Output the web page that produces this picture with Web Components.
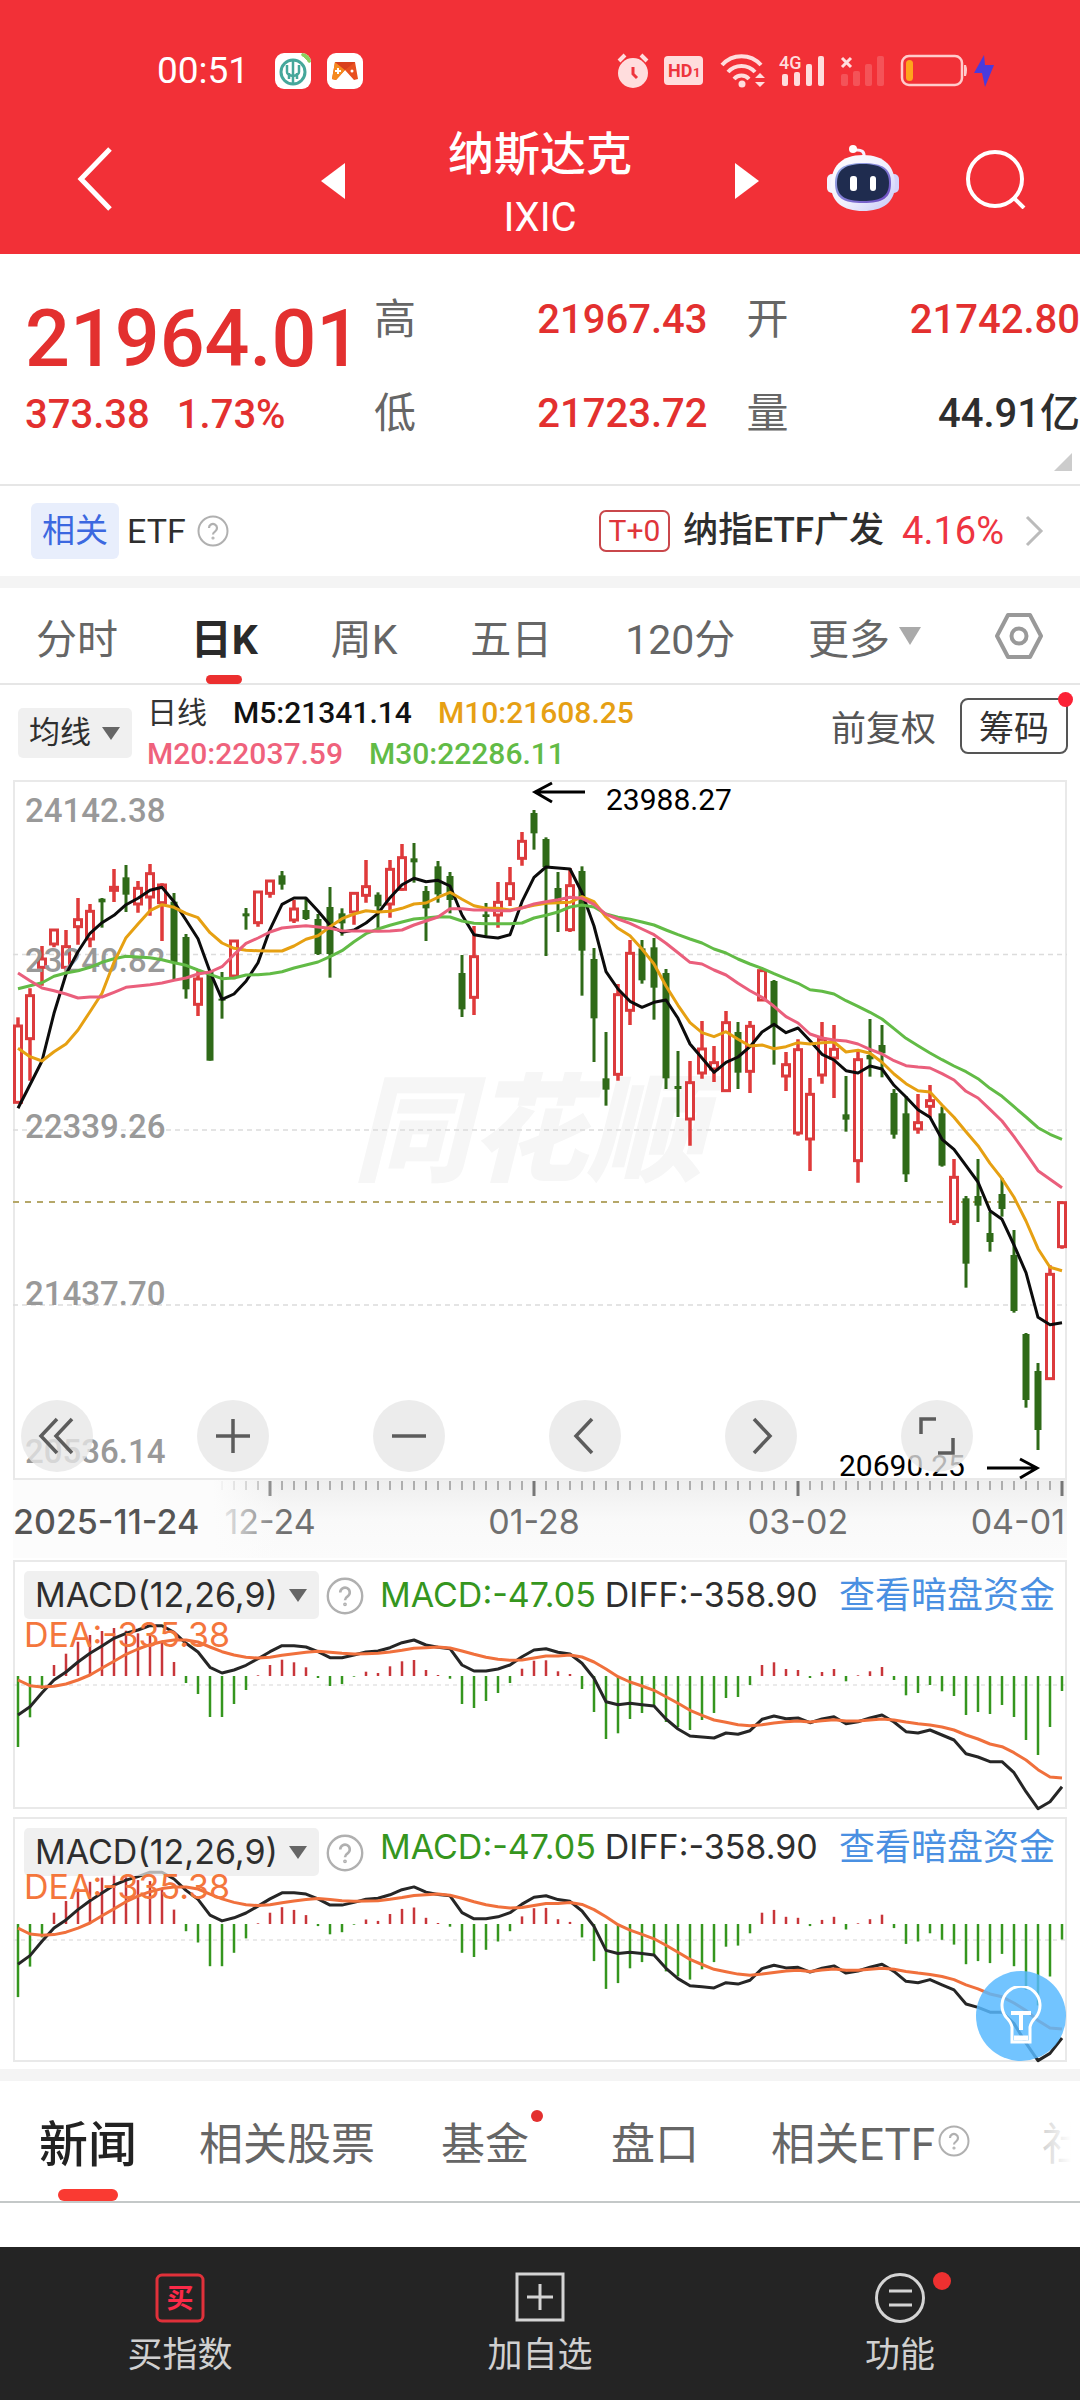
<!DOCTYPE html>
<html lang="zh-CN">
<head>
<meta charset="utf-8">
<meta name="viewport" content="width=device-width, initial-scale=1">
<title>纳斯达克 IXIC</title>
<style>
  html { background: #fff; }
  body {
    margin: 0; min-height: 100vh; display: flex; flex-direction: column;
    font-family: Roboto, "Noto Sans CJK SC", sans-serif; color: #2e2e2e; background: #fff;
    --red: #e3302f; --grey: #666; --line: #e6e6e6; --ui: Inter, "Noto Sans CJK SC", sans-serif;
  }
</style>
</head>
<body>
<app-header></app-header>
<quote-panel price="21964.01" change="373.38" percent="1.73%">
  <quote-stat label="高">21967.43</quote-stat>
  <quote-stat label="开">21742.80</quote-stat>
  <quote-stat label="低">21723.72</quote-stat>
  <quote-stat label="量" plain>44.91亿</quote-stat>
</quote-panel>
<related-etf></related-etf>
<section-gap></section-gap>
<period-tabs></period-tabs>
<chart-legend></chart-legend>
<candle-chart></candle-chart>
<time-axis></time-axis>
<macd-panel></macd-panel>
<macd-panel compact></macd-panel>
<section-gap></section-gap>
<news-tabs></news-tabs>
<bottom-nav>
  <nav-item label="买指数"><svg width="50" height="52" viewBox="0 0 50 52"><rect x="2" y="3" width="46" height="46" rx="5" fill="none" stroke="#e0313a" stroke-width="3"/><text x="25" y="36" font-size="27" font-weight="700" fill="#fb2a48" text-anchor="middle">买</text></svg></nav-item>
  <nav-item label="加自选"><svg width="50" height="52" viewBox="0 0 50 52" fill="none" stroke="#d4d4d4" stroke-width="3"><rect x="2" y="2" width="46" height="46"/><path d="M25 12V38M12 25H38"/></svg></nav-item>
  <nav-item label="功能" dot><svg width="50" height="52" viewBox="0 0 50 52" fill="none" stroke="#d4d4d4" stroke-width="3"><circle cx="25" cy="26" r="23.5"/><path d="M14 19H37M14 33H37"/></svg></nav-item>
</bottom-nav>

<script>
const RESET = `
  *, *::before, *::after, :host { box-sizing: border-box; }
  button, select { font: inherit; color: inherit; background: none; border: 0; margin: 0; padding: 0; border-radius: 0; }
  select { appearance: none; outline: none; }
  a { color: inherit; text-decoration: none; }
  svg { display: block; flex: none; }
`;
function define(name, css, render) {
  customElements.define(name, class extends HTMLElement {
    connectedCallback() {
      if (this.shadowRoot) return;
      const root = this.attachShadow({ mode: 'open' });
      root.innerHTML = `<style>${RESET}${css}</style>${render(this)}`;
    }
  });
}

/* ---------- small shared parts ---------- */
define('section-gap', `:host { display: block; height: 12px; background: #f4f4f4; flex: none; }`, () => '');

define('help-mark', `:host { display: block; width: var(--size, 32px); height: var(--size, 32px); flex: none; }
  svg { width: 100%; height: 100%; }`,
  () => `<svg viewBox="0 0 32 32" fill="none" stroke="#b0b0b0" stroke-width="2" role="img" aria-label="help"><circle cx="16" cy="16" r="14.5"/><path d="M12 13a4 4 0 1 1 6.200 3.300Q16 17.700 16 19.500" stroke-width="2.200"/><circle cx="16" cy="23" r=".6"/></svg>`);

define('pick-list', `
  :host { display: grid; align-items: center; background: rgba(234, 234, 234, .72); border-radius: 5px; height: 50px; }
  select { grid-area: 1 / 1; height: 100%; padding: 0 41px 0 11px; }
  svg { grid-area: 1 / 1; justify-self: end; margin-right: 12px; pointer-events: none; }`,
  el => `<select aria-label="${el.getAttribute('value')}"><option>${el.getAttribute('value')}</option></select>
    <svg width="18" height="14" viewBox="0 0 18 14"><path d="M0 1H18L9 14Z" fill="#666"/></svg>`);

/* ---------- header ---------- */
define('status-bar', `
  :host { display: flex; align-items: center; height: 104px; padding: 38px 84px 0 157px; color: #fff; font-size: 37px; line-height: 66px; }
  svg { overflow: visible; }
  .apps { display: flex; gap: 16px; margin-left: 26px; }
  .state { display: flex; align-items: center; gap: 14px; margin-left: auto; }
`, () => `
  <span>00:51</span>
  <span class="apps">
    <svg width="36" height="36" viewBox="0 0 36 36"><rect width="36" height="36" rx="9" fill="#fff"/><circle cx="18" cy="19" r="12" fill="none" stroke="#45a79b" stroke-width="3"/><path d="M18 7V31M12 12v7q0 3 6 4 6-1 6-4v-7M14 20v6M22 20v6" fill="none" stroke="#45a79b" stroke-width="2.500"/><path d="M27 0a9 9 0 0 1 9 9l-2 1-8-8Z" fill="#8ccf5f"/><path d="M28 4l4 4" stroke="#fff"/></svg>
    <svg width="36" height="36" viewBox="0 0 36 36"><rect width="36" height="36" rx="9" fill="#fff"/><path d="M8 9h20l3 17-4 1-9-10-9 10-4-1Z" fill="#e8501f"/><path d="M8 9l10 8-9 10-4-1Z" fill="#f58a1f"/><path d="M8 9h20l-10 8Z" fill="#d9401c"/><path d="M11 15v6M8 18h6" stroke="#fff" stroke-width="2"/><circle cx="25" cy="18" r="1.500" fill="#fff"/></svg>
  </span>
  <span class="state">
    <svg width="34" height="36" viewBox="0 0 34 36"><circle cx="17" cy="20" r="15" fill="#fdd"/><path d="M3 8l6-6M31 8l-6-6" stroke="#fdd" stroke-width="4"/><path d="M17 14v7l4 4" fill="none" stroke="#ee343c" stroke-width="3"/></svg>
    <svg width="40" height="30" viewBox="0 0 40 30"><rect width="39" height="29" rx="4" fill="#fdd"/><text x="4" y="21" font-size="18" font-weight="700" fill="#ee343c">HD</text><text x="29" y="21" font-size="13" font-weight="700" fill="#ee343c">1</text></svg>
    <svg width="46" height="36" viewBox="0 0 46 36" fill="none" stroke="#fdd" stroke-width="4"><path d="M4 12a26 26 0 0 1 39 0M10 19a18 18 0 0 1 27 0M16 26a10 10 0 0 1 15 0"/><circle cx="24" cy="31" r="3.500" fill="#fdd" stroke="none"/><path d="M37 25l5-5 5 5ZM37 29l5 5 5-5Z" fill="#fdd" stroke="none"/></svg>
    <svg width="48" height="36" viewBox="0 0 48 36"><text x="1" y="16" font-size="18" font-weight="500" fill="#fdd">4G</text><g fill="#fdd"><rect x="4" y="21" width="6" height="12" rx="2"/><rect x="16" y="19" width="6" height="14" rx="2"/><rect x="28" y="11" width="6" height="22" rx="2"/><rect x="40" y="3" width="6" height="30" rx="2"/></g></svg>
    <svg width="46" height="36" viewBox="0 0 46 36"><path d="M2 5l9 9M11 5l-9 9" stroke="#fdd" stroke-width="3"/><g fill="#fdd" opacity=".2"><rect x="1" y="21" width="7" height="12" rx="2"/><rect x="13" y="18" width="7" height="15" rx="2"/><rect x="25" y="11" width="7" height="22" rx="2"/><rect x="37" y="3" width="7" height="30" rx="2"/></g></svg>
    <svg width="96" height="36" viewBox="0 0 96 36"><rect x="2" y="3" width="60" height="29" rx="7" fill="none" stroke="#fcc" stroke-width="2.500"/><rect x="6" y="7" width="7" height="21" rx="3.500" fill="#ffa41c"/><path d="M64 12h2q2 5 0 11h-2Z" fill="#fcc"/><path d="M84 2L74 20h8l3 14L94 12h-9Z" fill="#4a3bdc"/></svg>
  </span>`);

define('title-bar', `
  :host { display: grid; grid-template-columns: 345px minmax(0, 1fr) 345px; align-items: center; height: 150px; color: #fff; }
  .left, .right { display: flex; justify-content: space-between; align-items: center; }
  .left { padding-left: 77px; } .right { padding-right: 54px; }
  .step { padding-top: 4px; }
  h1 { margin: 0; padding-top: 14px; text-align: center; font-weight: 500; font-size: 46px; line-height: 64px; }
  small { display: block; font-size: 40px; font-weight: 400; line-height: 64px; }
`, () => `
  <div class="left">
    <button aria-label="返回"><svg width="36" height="64" viewBox="0 0 36 64"><path d="M33 2L4 32L33 62" fill="none" stroke="#fff" stroke-width="5"/></svg></button>
    <button class="step" aria-label="上一个"><svg width="24" height="36" viewBox="0 0 24 36"><path d="M24 0V36L0 18Z" fill="#fff"/></svg></button>
  </div>
  <h1>纳斯达克<small>IXIC</small></h1>
  <div class="right">
    <button class="step" aria-label="下一个"><svg width="24" height="36" viewBox="0 0 24 36"><path d="M0 0V36L24 18Z" fill="#fff"/></svg></button>
    <button aria-label="助手"><svg width="72" height="68" viewBox="0 0 72 68">
      <defs><linearGradient id="shell" x1="0" y1="0" x2="1" y2="1"><stop offset="0" stop-color="#fff"/><stop offset=".55" stop-color="#f0effd"/><stop offset="1" stop-color="#c3c6f6"/></linearGradient>
      <linearGradient id="rim" x1="0" y1="0" x2="1" y2="1"><stop offset="0" stop-color="#9ab4e8"/><stop offset="1" stop-color="#6a45c0"/></linearGradient></defs>
      <path d="M37 12Q38 4 28 5" fill="none" stroke="#f7f0ff" stroke-width="3"/><circle cx="26" cy="4" r="4" fill="#fff"/>
      <rect x="0" y="29" width="12" height="19" rx="5" fill="#f3f3ff"/><rect x="60" y="29" width="12" height="19" rx="5" fill="#d3d3fa"/>
      <path d="M36 10C58 10 68 22 68 40C68 57 56 66 36 66C16 66 4 57 4 40C4 22 14 10 36 10Z" fill="url(#shell)"/>
      <path d="M36 18C56 18 64 24 64 38C64 53 56 58 36 58C16 58 8 53 8 38C8 24 16 18 36 18Z" fill="url(#rim)"/>
      <path d="M36 19C54 19 62 25 62 38C62 51 54 56 36 56C18 56 10 51 10 38C10 25 18 19 36 19Z" fill="#1f2c4f"/>
      <rect x="23" y="31" width="7" height="15" rx="3" fill="#fff"/><rect x="43" y="31" width="6" height="15" rx="3" fill="#fff"/></svg></button>
    <button aria-label="搜索"><svg width="60" height="60" viewBox="0 0 60 60" fill="none" stroke="#fff" stroke-width="4"><circle cx="29" cy="30" r="27"/><path d="M47 48L58 59"/></svg></button>
  </div>`);

define('app-header', `:host { display: block; background: #f23037; }`, () => `<status-bar></status-bar><title-bar></title-bar>`);

/* ---------- quote ---------- */
define('quote-stat', `
  :host { display: flex; justify-content: space-between; align-items: center; font-size: 40px; font-weight: 500; color: var(--red); line-height: 94px; }
  :host([plain]) { color: #2e2e2e; }
  span { color: var(--grey); font-size: 42px; font-weight: 400; }
`, el => `<span>${el.getAttribute('label')}</span><slot></slot>`);

define('quote-panel', `
  :host { display: grid; grid-template-columns: 374px minmax(0, 1fr); height: 232px; border-bottom: 2px solid var(--line); position: relative; color: var(--red); }
  .price { padding: 35px 0 0 25px; }
  strong { display: block; font-size: 79px; line-height: 100px; font-weight: 500; }
  p { margin: 0; display: flex; gap: 27px; font-size: 40px; line-height: 52px; font-weight: 500; }
  .stats { display: grid; grid-template-columns: 1fr 1fr; column-gap: 39px; padding-top: 19px; align-content: start; }
  .more { position: absolute; right: 8px; bottom: 13px; }
`, el => `
  <div class="price"><strong>${el.getAttribute('price')}</strong>
    <p><span>${el.getAttribute('change')}</span><span>${el.getAttribute('percent')}</span></p></div>
  <div class="stats"><slot></slot></div>
  <svg class="more" width="18" height="18"><path d="M18 0V18H0Z" fill="#ccc"/></svg>`);

define('related-etf', `
  :host { display: flex; align-items: center; height: 90px; padding: 0 36px 0 31px; }
  .tag { background: #e8eefc; color: #3c68e0; border-radius: 6px; padding: 0 11px; font-size: 33px; line-height: 56px; }
  .name { font-size: 34px; margin: 0 11px 0 8px; }
  a { display: flex; align-items: center; margin-left: auto; font-size: 35px; line-height: 50px; }
  .t0 { border: 2px solid #c9474b; color: #e0353a; border-radius: 7px; padding: 0 8px; font-size: 30px; line-height: 38px; margin-right: 13px; }
  .fund { font-weight: 500; }
  .up { color: #ee3441; font-size: 38px; margin: 0 20px 0 18px; }
`, () => `<span class="tag">相关</span><span class="name">ETF</span><help-mark></help-mark>
  <a href="#etf"><span class="t0">T+0</span><span class="fund">纳指ETF广发</span><span class="up">4.16%</span>
  <svg width="20" height="34" viewBox="0 0 20 34"><path d="M3 3L17 17L3 31" fill="none" stroke="#bbb" stroke-width="3"/></svg></a>`);

/* ---------- chart controls ---------- */
define('period-tabs', `
  :host { display: block; height: 97px; border-bottom: 2px solid var(--line); }
  nav { display: flex; align-items: stretch; justify-content: space-between; height: 96px; padding: 0 36px; color: var(--grey); font-size: 41px; }
  button { position: relative; white-space: nowrap; display: flex; align-items: center; gap: 9px; }
  .on { color: #2a2a2a; font-weight: 700; }
  .on::after { content: ""; position: absolute; bottom: 0; left: 50%; width: 36px; margin-left: -18px; height: 9px; border-radius: 5px; background: #ec2f2f; }
`, () => `<nav><button>分时</button><button class="on">日K</button><button>周K</button><button>五日</button><button>120分</button>
  <button aria-haspopup="menu">更多<svg width="22" height="18" viewBox="0 0 22 18"><path d="M0 0H22L11 18Z" fill="#aaa"/></svg></button>
  <button aria-label="设置"><svg width="50" height="48" viewBox="0 0 50 48" fill="none" stroke="#999" stroke-width="4" stroke-linejoin="round"><path d="M14 3H36L47 24L36 45H14L3 24Z"/><circle cx="25" cy="24" r="7.500"/></svg></button></nav>`);

define('chart-legend', `
  :host { display: flex; align-items: center; height: 95px; padding: 0 12px 0 18px; }
  pick-list { font-size: 31px; margin-right: 15px; }
  .ma { font-size: 30px; line-height: 41px; font-weight: 500; padding-top: 1px; }
  .ma div { display: flex; gap: 26px; }
  .first { color: #111; } .first b { font-weight: 400; color: #333; }
  .adj { margin: 0 0 14px auto; font-size: 35px; color: #555; }
  .chip { position: relative; margin: 0 0 14px 24px; border: 2px solid #555; border-radius: 8px; height: 56px; padding: 0 17px; font-size: 35px; color: #333; }
  .chip::after { content: ""; position: absolute; right: -7px; top: -8px; width: 15px; height: 15px; border-radius: 50%; background: #fb2236; }
`, () => `<pick-list value="均线"></pick-list>
  <div class="ma"><div class="first"><b>日线</b><span>M5:21341.14</span><span style="color:#e6a014">M10:21608.25</span></div>
  <div><span style="color:#ef627c">M20:22037.59</span><span style="color:#62bb46">M30:22286.11</span></div></div>
  <button class="adj">前复权</button><button class="chip">筹码</button>`);

/* ---------- series; plot units are thirds of a pixel, one column every 12 pixels ---------- */
const UNIT = 3, STEP = 12, LEFT = 5;
const nums = s => s.trim().split(/[\s,]+/).map(Number);
const CANDLES = `r742,768,997,997 r655,677,806,932 r528,567,592,647 r478,480,522,532 r480,530,592,600 r384,449,470,524 r402,424,507,532 g384,386,397,473
r297,352,361,396 g285,322,374,426 r333,355,402,428 r282,311,381,437 r340,345,398,513 g369,395,578,627 g492,501,658,686 r598,627,703,738
g600,605,872,872 g606,686,692,746 r511,513,618,628 g414,430,439,479 r364,366,458,470 r331,333,370,383 g303,316,344,359 r390,417,450,459
g385,420,447,450 g432,447,552,555 g351,411,552,623 g415,430,460,497 r367,370,426,464 r270,350,376,398 g367,374,409,475 r270,298,402,443
r222,263,358,362 g219,265,277,338 g348,363,415,513 g273,289,373,398 g306,318,390,430 g555,609,718,741 r468,560,682,735 g399,433,441,502
r336,397,435,473 r291,341,386,408 r186,214,265,287 g120,129,190,239 g202,207,291,558 g306,354,399,486 r294,347,479,486 g289,303,542,677
g534,567,745,876 g786,925,959,1007 r642,674,913,932 r510,550,721,765 g510,535,631,641 g504,532,653,749 g597,609,925,957 g843,948,957,1041
r873,938,1047,1127 r753,837,909,926 r828,878,897,936 r723,758,962,965 g756,786,908,957 r753,769,904,969 r597,602,690,692 g630,633,765,884
r846,884,918,963 r808,839,1089,1097 r924,973,1107,1203 r756,808,915,941 r765,838,864,984 g918,1033,1049,1085 r846,869,1172,1238 g747,855,868,920
g765,825,850,922 g957,969,1094,1106 g978,1030,1213,1236 r972,1058,1077,1091 r945,992,1009,1042 g1010,1030,1187,1190 r1167,1222,1355,1365 g1278,1285,1481,1553
g1167,1278,1307,1356 g1326,1389,1416,1445 g1224,1272,1317,1340 g1380,1455,1623,1628 g1689,1692,1890,1913 g1779,1803,1980,2040 r1486,1513,1826,1827 r1296,1298,1430,1436`.split(/\s+/);
const MA5 = nums(`1015 944 873 730 613 545 490 458 436 404 385 361 352 395 450 506 605 688 672 634 578 478 403 384 384 423 466 487 480 459 430 383 344 325 335 331 348 435 494 500 504 494 395 322
 291 294 297 368 468 605 657 694 712 697 690 745 822 864 907 877 861 830 786 763 788 774 812 853 870 902 909 888 897 946 981 1019 1042 1108 1138 1187 1236 1322 1348 1425 1508 1642 1664 1658`);
const MA10 = nums(`835 860 873 845 822 780 725 670 577 503 462 422 404 412 430 443 488 519 535 541 542 543 543 528 508 497 470 446 432 422 426 424 415 402 399 382 367 388 407 415 415 420 413 406
 400 398 397 380 395 441 475 497 537 582 648 706 758 788 800 785 808 828 825 836 830 818 822 818 816 846 841 850 877 912 941 962 966 1005 1042 1085 1127 1180 1226 1282 1353 1436 1492 1502`);
const MA20 = nums(`609 632 654 662 672 684 681 681 667 652 648 644 639 631 624 612 606 590 554 520 504 486 474 470 467 471 475 482 483 483 484 483 480 465 453 441 416 416 420 420 422 422 414 402
 395 389 382 385 403 433 447 460 477 494 520 548 577 582 600 615 640 662 682 709 740 759 792 804 810 813 822 838 852 872 887 891 894 911 930 964 984 1018 1053 1100 1150 1202 1228 1253`);
const MA30 = nums(`656 647 638 619 609 602 592 577 566 559 561 563 569 578 586 600 613 626 624 615 614 611 605 594 585 576 560 542 515 491 477 466 456 447 444 440 441 453 460 461 461 461 459 444
 436 426 411 405 411 432 442 448 456 465 480 494 507 519 537 549 567 582 595 611 626 640 659 664 672 692 709 727 747 776 805 827 849 869 888 905 926 955 979 1010 1041 1073 1093 1108`);
const BARS = nums(`591 502 417 345 311 275 255 243 234 242 250 253 276 336 399 432 501 501 462 420 376 345 329 337 352 384 408 402 380 365 369 349 334 330 360 375 386 462 474 453 429 399 356 332
 331 364 372 417 486 567 550 507 489 468 516 531 540 510 489 444 441 405 345 337 357 360 384 366 357 394 376 364 351 390 436 429 405 424 438 495 486 492 465 501 570 615 531 423`);
const DIFF = nums(`495 470 428 390 366 336 310 288 265 250 240 227 227 247 280 306 352 369 360 346 326 305 287 287 291 305 323 323 315 306 303 293 278 270 285 292 296 345 363 363 357 345 320 300
 296 307 312 340 385 455 464 460 464 468 507 537 558 561 564 549 553 542 508 498 506 504 518 507 500 521 515 504 495 516 545 549 540 555 570 611 621 635 635 668 725 776 755 710`);
const DEA = nums(`390 407 411 409 402 390 375 354 334 313 297 284 275 270 270 276 291 305 315 322 324 322 316 311 307 304 307 310 312 311 310 306 301 295 293 291 294 303 313 322 328 331 330 324
 318 318 315 321 336 357 380 396 408 421 440 460 481 496 510 517 524 527 524 519 515 513 516 512 509 513 513 510 507 510 516 521 525 531 540 555 567 582 590 608 630 659 681 684`);
const colX = i => LEFT + i * STEP;
const trace = (v, y, color) => `<polyline fill="none" stroke="${color}" stroke-width="3" stroke-linejoin="round" points="${v.map((n, i) => colX(i) + ',' + y(n).toFixed(1)).join(' ')}"/>`;

define('candle-chart', `
  :host { display: block; position: relative; margin: 0 13px; }
  .plot { width: 100%; height: auto; overflow: visible; }
  .tools { position: absolute; left: 8px; right: 94px; bottom: 8px; display: flex; justify-content: space-between; }
  .tools button { width: 72px; height: 72px; border-radius: 50%; background: rgba(231, 231, 231, .78); display: grid; place-items: center; }
`, () => {
  const y = v => v / UNIT - 10;
  const candles = CANDLES.map((c, i) => {
    const up = c[0] === 'r', [h, t, b, l] = nums(c.slice(1)).map(y), x = colX(i);
    return up
      ? `<path d="M${x} ${h}V${t}M${x} ${b}V${l}" stroke="#e03a3a" stroke-width="3.500"/><rect x="${x - 3.5}" y="${t}" width="7" height="${Math.max(b - t, 1)}" fill="#fff" stroke="#dc3b3d" stroke-width="3"/>`
      : `<path d="M${x} ${h}V${l}" stroke="#2f6a18" stroke-width="3"/><rect x="${x - 3.5}" y="${t}" width="7" height="${Math.max(b - t, 2)}" fill="#2f6a18"/>`;
  }).join('');
  const labels = [['24142.38', 42], ['23240.82', 192], ['22339.26', 358], ['21437.70', 525], ['20536.14', 683]]
    .map(([t, b]) => `<text x="12" y="${b}">${t}</text>`).join('');
  const icon = d => `<svg width="40" height="40" viewBox="0 0 40 40" fill="none" stroke="#5c5c5c" stroke-width="3.500"><path d="${d}"/></svg>`;
  const tool = (name, d) => `<button aria-label="${name}">${icon(d)}</button>`;
  return `
  <svg class="plot" viewBox="0 0 1054 700">
    <rect x="1" y="1" width="1052" height="698" fill="none" stroke="#e9e9e9" stroke-width="2"/>
    <text x="340" y="392" font-size="117" font-weight="900" font-style="italic" fill="#f6f6f6">同花顺</text>
    <path d="M0 174.500H1054M0 350H1054M0 525H1054" stroke="#dcdcdc" stroke-width="1.500" stroke-dasharray="5 4"/>
    <path d="M0 422H1054" stroke="#b5a768" stroke-width="2" stroke-dasharray="6 6"/>
    ${candles}
    <g font-size="33" font-weight="500" fill="#999">${labels}</g>
    ${trace(MA5, y, '#0c0c0c')}${trace(MA30, y, '#62bb46')}${trace(MA10, y, '#e6a012')}${trace(MA20, y, '#ea5f7c')}
    <g fill="none" stroke="#000" stroke-width="3"><path d="M572 12H522M539 3L522 12L539 22"/><path d="M974 688H1024M1007 679L1024 688L1007 698"/></g>
    <g font-size="30" fill="#000"><text x="593" y="30">23988.27</text><text x="826" y="696">20690.25</text></g>
  </svg>
  <div class="tools">
    ${tool('最早', 'M20 3L4 20L20 37M35 3L19 20L35 37')}${tool('放大', 'M20 3V37M3 20H37')}${tool('缩小', 'M3 20H37')}
    ${tool('向左', 'M27 3L11 20L27 37')}${tool('向右', 'M13 3L29 20L13 37')}${tool('全屏', 'M4 18V3H19M21 37H36V22')}
  </div>`;
});

define('time-axis', `:host { display: block; margin: 0 13px; } svg { width: 100%; height: auto; overflow: visible; font-family: var(--ui); }`, () => {
  let ticks = '';
  for (let i = 16; i < 88; i++) {
    const x = colX(i), major = (i - 21) % 22 === 0;
    ticks += `<path d="M${x} 1V${major ? 16 : 10}" stroke="${major ? '#777' : '#999'}" stroke-width="${major ? 3 : 1.5}"/>`;
  }
  return `<svg viewBox="0 0 1054 80">
    <defs><linearGradient id="shade" x2="0" y2="1"><stop offset="0" stop-color="#eee"/><stop offset=".5" stop-color="#f9f9f9"/><stop offset="1" stop-color="#fbfbfb"/></linearGradient>
    <linearGradient id="fade"><stop offset="0" stop-color="#fcfcfc"/><stop offset=".74" stop-color="#fcfcfc"/><stop offset="1" stop-color="#fcfcfc" stop-opacity="0"/></linearGradient></defs>
    <rect width="1054" height="78" fill="url(#shade)"/>${ticks}
    <g font-size="34" fill="#707070"><text x="257" y="54" text-anchor="middle">12-24</text><text x="521" y="54" text-anchor="middle">01-28</text><text x="785" y="54" text-anchor="middle">03-02</text><text x="1052" y="54" text-anchor="end">04-01</text></g>
    <rect width="270" height="78" fill="url(#fade)"/>
    <text x="0" y="54" font-size="34" font-weight="500" fill="#555">2025-11-24</text></svg>`;
});

/* ---------- MACD ---------- */
define('macd-panel', `
  :host { display: grid; position: relative; margin: 0 13px 8px; --first: 48px; --second: 32px; font-family: var(--ui); }
  :host([compact]) { --first: 38px; --second: 22px; margin-bottom: 7px; }
  .plot { width: 100%; height: auto; grid-area: 1 / 1; overflow: visible; }
  .over { grid-area: 1 / 1; padding: 11px 12px 0 11px; z-index: 1; font-size: 34px; align-self: start; }
  .row { display: flex; align-items: flex-start; line-height: var(--first); white-space: nowrap; }
  pick-list { height: 48px; }
  help-mark { --size: 38px; margin: 6px 16px 0 7px; }
  .macd { color: #35961e; margin-right: 9px; }
  a { margin-left: auto; color: #4a90e2; font-size: 36px; }
  .dea { color: #f4763c; line-height: var(--second); }
  .tip { position: absolute; right: 1px; bottom: 1px; width: 90px; height: 90px; border-radius: 50%; background: rgba(87, 185, 255, .84); z-index: 2; display: grid; place-items: center; }
`, el => {
  const small = el.hasAttribute('compact');
  const height = small ? 245 : 249, zero = small ? 107 : 116, k = small ? 1.03 : 1;
  const y = v => zero + (v - 378) * k / UNIT;
  const bars = BARS.map((v, i) => `<path d="M${colX(i)} ${zero}V${y(v).toFixed(1)}" stroke="${v < 378 ? '#c8363a' : '#35961e'}" stroke-width="2.500"/>`).join('');
  const mid = small ? 123 : 125;
  return `
  <svg class="plot" viewBox="0 0 1054 ${height}">
    <rect x="1" y="1" width="1052" height="${height - 2}" fill="none" stroke="#e9e9e9" stroke-width="2"/>
    <path d="M0 ${mid}H1054" stroke="#e4e4e4" stroke-width="1.500" stroke-dasharray="4 4"/>
    ${bars}${trace(DIFF, y, '#262626')}${trace(DEA, y, '#f0703c')}
  </svg>
  <div class="over">
    <div class="row"><pick-list value="MACD(12,26,9)"></pick-list><help-mark></help-mark>
      <span class="macd">MACD:-47.05</span><span>DIFF:-358.90</span><a href="#funds">查看暗盘资金</a></div>
    <div class="dea">DEA:-335.38</div>
  </div>
  ${small ? `<button class="tip" aria-label="提示"><svg width="44" height="60" viewBox="0 0 44 60" fill="none" stroke="#fff" stroke-width="3"><path d="M13 41Q12 36 7 31A19 19 0 1 1 37 31Q32 36 31 41V56H13Z"/><path d="M12 27H32M22 27V44" stroke-width="4"/><path d="M15 52H29" stroke-width="5"/></svg></button>` : ''}`;
});

/* ---------- bottom ---------- */
define('news-tabs', `
  :host { display: block; border-bottom: 2px solid #c4c8c8; overflow: hidden; position: relative; }
  nav { display: flex; gap: 66px; height: 120px; padding-left: 39px; color: var(--grey); font-size: 44px; }
  button { position: relative; flex: none; display: flex; align-items: center; gap: 3px; padding-bottom: 1px; }
  .on { font-size: 49px; font-weight: 500; color: #222; margin-right: -4px; }
  .on::after { content: ""; position: absolute; left: 50%; margin-left: -30px; bottom: 0; width: 60px; height: 12px; border-radius: 6px; background: #fa3a32; }
  .new { padding-right: 16px; }
  .new::after { content: ""; position: absolute; right: 2px; top: 29px; width: 12px; height: 12px; border-radius: 50%; background: #e3302f; }
  .help { padding: 0 6px; }
  .edge { position: absolute; right: 0; top: 0; bottom: 0; width: 90px; background: linear-gradient(90deg, rgba(255,255,255,.2), #fff 90%); pointer-events: none; }
`, () => `<nav><button class="on">新闻</button><button>相关股票</button><button class="new">基金</button><button>盘口</button>
  <button class="help">相关ETF<help-mark></help-mark></button><button>社</button></nav><div class="edge"></div>`);

define('nav-item', `
  :host { display: flex; justify-content: center; }
  button { position: relative; display: flex; flex-direction: column; align-items: center; font-size: 35px; line-height: 50px; padding-top: 25px; gap: 7px; align-self: start; }
  i { position: absolute; width: 18px; height: 18px; border-radius: 50%; background: #ee3030; left: 50%; margin-left: 33px; top: 25px; }
`, el => `<button><slot></slot><span>${el.getAttribute('label')}</span>${el.hasAttribute('dot') ? '<i></i>' : ''}</button>`);

define('bottom-nav', `:host { display: grid; grid-template-columns: repeat(3, 1fr); height: 153px; flex: none; margin-top: auto; background: #242424; color: #d0d0d0; }`, () => `<slot></slot>`);
</script>
</body>
</html>
